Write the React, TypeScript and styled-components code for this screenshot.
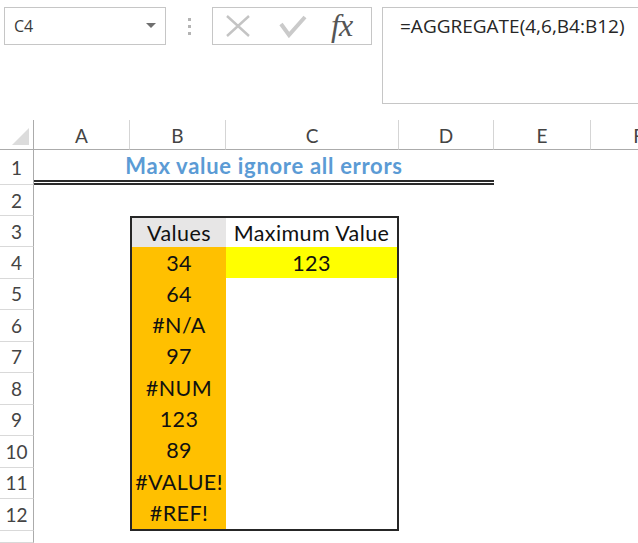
import React from 'react';
import styled, { createGlobalStyle } from 'styled-components';

const GlobalStyle = createGlobalStyle`
  html, body {
    margin: 0;
    padding: 0;
    background: #ffffff;
  }
`;

const Page = styled.div`
  width: 638px;
  height: 543px;
  overflow: hidden;
  background: #ffffff;
  font-family: Lato, 'Liberation Sans', sans-serif;
`;

/* ---------- formula bar ---------- */

const FormulaBar = styled.div`
  display: flex;
  align-items: flex-start;
  height: 120px;
  padding: 7px 0 0 4px;
  box-sizing: border-box;
`;

const NameBox = styled.div`
  width: 162px;
  height: 38px;
  box-sizing: border-box;
  border: 1px solid #c6c6c6;
  display: flex;
  align-items: center;
  justify-content: space-between;
  padding: 0 9px 0 9px;
  font-family: 'Open Sans', 'Liberation Sans', sans-serif;
  font-size: 16px;
  color: #3a3a3a;
`;

const DropArrow = styled.span`
  width: 0;
  height: 0;
  border-left: 5px solid transparent;
  border-right: 5px solid transparent;
  border-top: 5px solid #6f6f6f;
  margin-top: -2px;
`;

const Grip = styled.div`
  width: 46px;
  height: 38px;
  display: flex;
  flex-direction: column;
  align-items: center;
  justify-content: center;
  gap: 4px;
`;

const GripDot = styled.span`
  width: 3px;
  height: 3px;
  background: #b4b4b4;
`;

const FuncBox = styled.div`
  width: 160px;
  height: 38px;
  box-sizing: border-box;
  border: 1px solid #c6c6c6;
  display: flex;
  align-items: center;
  padding: 0 0 0 12px;
  gap: 28px;
`;

const FxText = styled.span`
  font-family: 'Liberation Serif', 'DejaVu Serif', serif;
  font-style: italic;
  font-size: 32px;
  color: #555555;
  line-height: 1;
  margin-left: -4px;
  margin-top: -2px;
  letter-spacing: -1px;
`;

const FormulaInput = styled.div`
  flex: 1;
  height: 97px;
  margin-left: 10px;
  margin-right: -10px;
  box-sizing: border-box;
  border: 1px solid #c6c6c6;
  padding: 5px 0 0 17px;
  font-family: 'Open Sans', 'Liberation Sans', sans-serif;
  font-size: 19px;
  color: #262626;
`;

/* ---------- sheet grid ---------- */

const Sheet = styled.div`
  display: grid;
  width: 687px;
  grid-template-columns: 34px 96px 96px 173px 95px 97px 96px;
  grid-template-rows: 30px 35px 31px 31px repeat(9, 31.5px) 1fr;
  height: 423px;
`;

const Corner = styled.div`
  position: relative;
  border-right: 1px solid #ababab;
  border-bottom: 1px solid #ababab;
`;

const CornerTriangle = styled.span`
  position: absolute;
  right: 4px;
  bottom: 4px;
  width: 0;
  height: 0;
  border-left: 17px solid transparent;
  border-bottom: 17px solid #dcdcdc;
`;

const ColHead = styled.div`
  display: flex;
  align-items: center;
  justify-content: center;
  border-right: 1px solid #d5d5d5;
  border-bottom: 1px solid #ababab;
  font-size: 19px;
  color: #444444;
  padding-top: 2px;
  overflow: hidden;
`;

const RowHead = styled.div<{ $row: number }>`
  grid-column: 1;
  grid-row: ${(p) => p.$row};
  display: flex;
  align-items: center;
  justify-content: center;
  border-right: 1px solid #ababab;
  border-bottom: 1px solid #d9d9d9;
  font-size: 19px;
  color: #444444;
`;

const Title = styled.div`
  grid-column: 2 / 6;
  grid-row: 2;
  display: flex;
  align-items: center;
  justify-content: center;
  border-bottom: 5px double #2a2a2a;
  font-weight: 700;
  font-size: 22px;
  letter-spacing: 0.7px;
  color: #5b9bd5;
  padding-top: 1px;
`;

const DataTable = styled.div`
  grid-column: 3 / 5;
  grid-row: 4 / 14;
  border: 2px solid #262626;
  display: grid;
  grid-template-columns: 94px 1fr;
  grid-template-rows: 29px repeat(9, 1fr);
`;

const Cell = styled.div<{ $bg?: string }>`
  display: flex;
  align-items: center;
  justify-content: center;
  background: ${(p) => p.$bg || 'transparent'};
  font-size: 21.5px;
  letter-spacing: 0.4px;
  color: #111111;
  white-space: nowrap;
`;

const values = ['34', '64', '#N/A', '97', '#NUM', '123', '89', '#VALUE!', '#REF!'];
const columns = ['A', 'B', 'C', 'D', 'E', 'F'];

const CrossIcon = () => (
  <svg width="26" height="22" viewBox="0 0 26 22">
    <path d="M2 1 L24 21 M24 1 L2 21" stroke="#c4c4c4" strokeWidth="2.4" fill="none" />
  </svg>
);

const CheckIcon = () => (
  <svg width="28" height="24" viewBox="0 0 28 24">
    <path d="M2 10 L10 21 L26 3" stroke="#cacaca" strokeWidth="4" fill="none" strokeLinejoin="miter" />
  </svg>
);

export default function App() {
  return (
    <Page>
      <GlobalStyle />
      <FormulaBar>
        <NameBox>
          <span>C4</span>
          <DropArrow />
        </NameBox>
        <Grip>
          <GripDot />
          <GripDot />
          <GripDot />
        </Grip>
        <FuncBox>
          <CrossIcon />
          <CheckIcon />
          <FxText>fx</FxText>
        </FuncBox>
        <FormulaInput>=AGGREGATE(4,6,B4:B12)</FormulaInput>
      </FormulaBar>

      <Sheet>
        <Corner>
          <CornerTriangle />
        </Corner>
        {columns.map((c) => (
          <ColHead key={c}>{c}</ColHead>
        ))}

        {Array.from({ length: 13 }, (_, i) => (
          <RowHead key={i} $row={i + 2}>
            {i < 12 ? i + 1 : ''}
          </RowHead>
        ))}

        <Title>Max value ignore all errors</Title>

        <DataTable>
          <Cell $bg="#e7e6e6">Values</Cell>
          <Cell>Maximum Value</Cell>
          {values.map((v, i) => (
            <React.Fragment key={i}>
              <Cell $bg="#ffc000">{v}</Cell>
              <Cell $bg={i === 0 ? '#ffff00' : undefined}>{i === 0 ? '123' : ''}</Cell>
            </React.Fragment>
          ))}
        </DataTable>
      </Sheet>
    </Page>
  );
}
